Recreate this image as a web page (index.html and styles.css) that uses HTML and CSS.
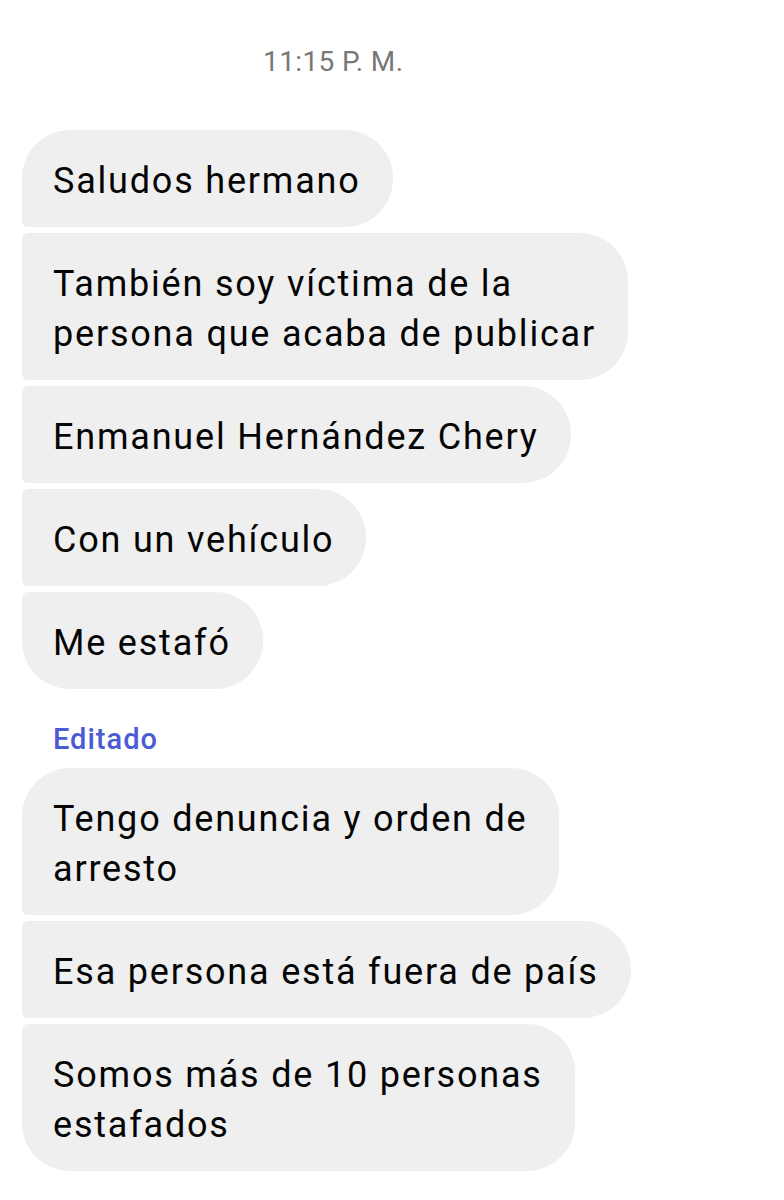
FILE: index.html
```html
<!DOCTYPE html>
<html lang="es">
<head>
<meta charset="utf-8">
<title>Chat</title>
<link rel="stylesheet" href="styles.css">
</head>
<body>
<main class="thread">
  <div class="time">11:15 P. M.</div>

  <div class="group">
    <div class="bubble first">Saludos hermano</div>
    <div class="bubble">También soy víctima de la<br>persona que acaba de publicar</div>
    <div class="bubble">Enmanuel Hernández Chery</div>
    <div class="bubble">Con un vehículo</div>
    <div class="bubble last">Me estafó</div>
  </div>

  <div class="edited">Editado</div>

  <div class="group">
    <div class="bubble first">Tengo denuncia y orden de<br>arresto</div>
    <div class="bubble">Esa persona está fuera de país</div>
    <div class="bubble last">Somos más de 10 personas<br>estafados</div>
  </div>
</main>
</body>
</html>
```
FILE: styles.css
```css
html, body {
  margin: 0;
  padding: 0;
  background: #ffffff;
}

body {
  font-family: Roboto, "Noto Sans", "Liberation Sans", sans-serif;
  color: #050505;
}

.thread {
  display: flex;
  flex-direction: column;
  align-items: flex-start;
  padding: 0 0 40px 22px;
}

.time {
  padding: 46px 0 0 241px;
  font-size: 28px;
  line-height: 32px;
  letter-spacing: 0.4px;
  color: #787878;
}

.group {
  display: flex;
  flex-direction: column;
  align-items: flex-start;
  gap: 6px;
  margin-top: 52px;
}

.bubble {
  background: #efefef;
  font-size: 36px;
  letter-spacing: 1.8px;
  line-height: 50px;
  padding: 26px 32px 21px 31px;
  border-radius: 6px 48px 48px 6px;
  white-space: nowrap;
}

.bubble.first {
  border-top-left-radius: 48px;
}

.bubble.last {
  border-bottom-left-radius: 48px;
}

.edited {
  margin: 33px 0 0 31px;
  font-size: 29px;
  line-height: 34px;
  font-weight: 500;
  letter-spacing: 1px;
  color: #4b5bd3;
}

.edited + .group {
  margin-top: 12px;
}
```
